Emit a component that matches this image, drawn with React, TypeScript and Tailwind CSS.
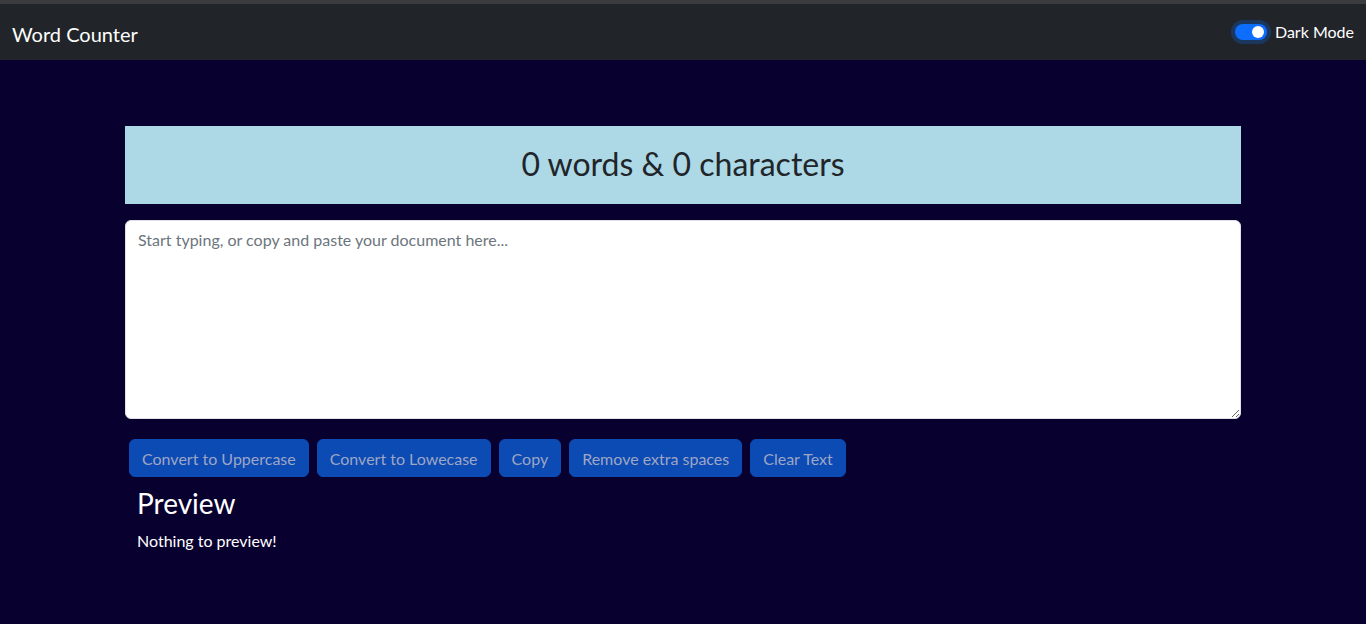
import { useState } from "react";

const font = { fontFamily: 'Lato, "Noto Sans", Arial, sans-serif' };

function Navbar() {
  return (
    <nav className="bg-[#212529]">
      <div className="h-[4px] bg-[#3a3c40]" />
      <div className="h-[56px] flex items-center justify-between pl-3 pr-3 pt-[3px]">
        <span className="text-[20px] text-white">Word Counter</span>
        <label className="flex items-center gap-2 text-white text-[16px] -mt-[3px]">
          <span className="relative w-8 h-4 rounded-full bg-[#0d6efd] shadow-[0_0_0_4px_rgba(13,110,253,0.25)]">
            <span className="absolute right-[3px] top-[2px] w-3 h-3 rounded-full bg-white" />
          </span>
          Dark Mode
        </label>
      </div>
    </nav>
  );
}

export default function App() {
  const [text, setText] = useState("");
  const words = text.split(/\s+/).filter((w) => w.length > 0).length;
  const buttons = ["Convert to Uppercase", "Convert to Lowecase", "Copy", "Remove extra spaces", "Clear Text"];

  return (
    <div style={font} className="min-h-[624px] bg-[#08002e]">
      <Navbar />
      <div className="w-[1116px] mx-auto pt-[66px]">
        <div className="h-[78px] bg-[#add8e6] flex items-center justify-center">
          <h1 className="text-[32px] text-[#212529] -mt-[2px]">
            {words} words &amp; {text.length} characters
          </h1>
        </div>
        <textarea
          value={text}
          onChange={(e) => setText(e.target.value)}
          placeholder="Start typing, or copy and paste your document here..."
          className="block w-full h-[199px] mt-4 px-3 py-[7px] bg-white rounded-md border border-[#dee2e6] text-[16px] text-[#212529] placeholder:text-[#6c757d] outline-none"
        />
        <div className="flex mt-5">
          {buttons.map((b) => (
            <button
              key={b}
              disabled={text.length === 0}
              className="mx-1 px-3 pt-[7px] pb-[5px] text-[16px] leading-6 rounded-md border border-[#0c4ab4] bg-[#0c4ab4] text-[#9ea6c4]"
            >
              {b}
            </button>
          ))}
        </div>
        <div className="px-3 mt-[10px] text-white">
          <h2 className="text-[28px] leading-[1.2] mb-2">Preview</h2>
          <p className="text-[16px]">{text.length > 0 ? text : "Nothing to preview!"}</p>
        </div>
      </div>
    </div>
  );
}
